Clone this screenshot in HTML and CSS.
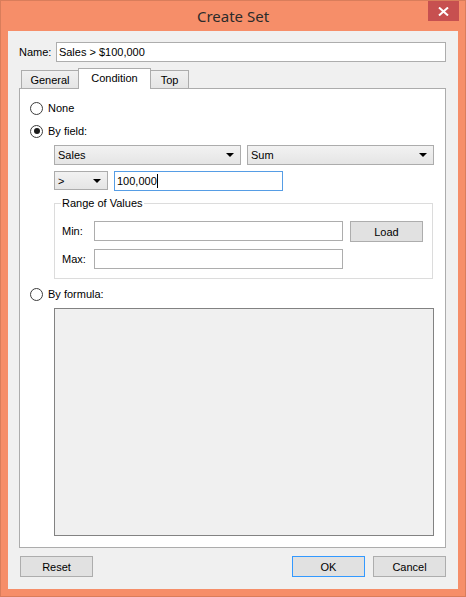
FILE: index.html
```html
<!DOCTYPE html>
<html>
<head>
<meta charset="utf-8">
<title>Create Set</title>
<link rel="stylesheet" href="styles.css">
</head>
<body>
<div class="window">
  <div class="titlebar">
    <div class="tb-spacer"></div>
    <div class="title">Create Set</div>
    <div class="tb-right">
      <div class="close">
        <svg width="11" height="9" viewBox="0 0 11 9"><path d="M1 0.5 L10 8.5 M10 0.5 L1 8.5" stroke="#fff" stroke-width="2"/></svg>
      </div>
    </div>
  </div>
  <div class="client">
    <div class="name-row">
      <span class="name-label">Name:</span>
      <div class="textbox name-input">Sales &gt; $100,000</div>
    </div>
    <div class="tabs">
      <div class="tab">General</div>
      <div class="tab selected">Condition</div>
      <div class="tab">Top</div>
    </div>
    <div class="panel">
      <div class="radio-row">
        <span class="radio"></span><span>None</span>
      </div>
      <div class="radio-row second">
        <span class="radio checked"></span><span>By field:</span>
      </div>
      <div class="field-row">
        <div class="dropdown wide"><span>Sales</span><span class="arrow"></span></div>
        <div class="dropdown wide"><span>Sum</span><span class="arrow"></span></div>
      </div>
      <div class="op-row">
        <div class="dropdown op"><span>&gt;</span><span class="arrow"></span></div>
        <div class="textbox value-input focus"><span class="caret">100,000</span></div>
      </div>
      <div class="group">
        <div class="legend">Range of Values</div>
        <div class="range-row">
          <span class="range-label">Min:</span>
          <div class="textbox range-input"></div>
          <div class="button load">Load</div>
        </div>
        <div class="range-row max">
          <span class="range-label">Max:</span>
          <div class="textbox range-input"></div>
        </div>
      </div>
      <div class="radio-row formula-radio">
        <span class="radio"></span><span>By formula:</span>
      </div>
      <div class="formula-box"></div>
    </div>
    <div class="buttons">
      <div class="button">Reset</div>
      <div class="btn-spacer"></div>
      <div class="button default">OK</div>
      <div class="button">Cancel</div>
    </div>
  </div>
</div>
</body>
</html>
```
FILE: styles.css
```css
* { box-sizing: border-box; }
html, body { margin: 0; padding: 0; }
body {
  font-family: "Liberation Sans", Arial, sans-serif;
  font-size: 11px;
  color: #000;
  background: #f68e69;
}
.window {
  width: 466px;
  height: 597px;
  background: #f68e69;
  border: 1px solid #d97d5b;
  padding: 0 7px 7px 7px;
}
.titlebar {
  height: 30px;
  display: grid;
  grid-template-columns: 1fr auto 1fr;
  margin: 0 -7px;
}
.title {
  font-family: "Noto Sans", "Open Sans", sans-serif;
  font-size: 15px;
  color: #2b2b2b;
  line-height: 30px;
}
.tb-right { display: flex; justify-content: flex-end; }
.close {
  width: 31px;
  height: 20px;
  margin-right: 6px;
  background: #c75050;
  display: flex;
  align-items: center;
  justify-content: center;
}
.client {
  background: #f0f0f0;
  height: 558px;
  padding: 11px 12px 0 11px;
}
.name-row {
  display: flex;
  align-items: center;
  height: 20px;
}
.name-label { width: 37px; }
.textbox {
  background: #fff;
  border: 1px solid #adadad;
  height: 20px;
  display: flex;
  align-items: center;
  padding-left: 2px;
  white-space: nowrap;
}
.name-input { width: 391px; }
.tabs {
  margin-top: 6px;
  height: 20px;
  padding-left: 2px;
  display: flex;
  align-items: flex-end;
  position: relative;
  z-index: 2;
}
.tab {
  height: 18px;
  border: 1px solid #acacac;
  border-bottom: none;
  background: linear-gradient(#f0f0f0, #e5e5e5);
  display: flex;
  align-items: center;
  justify-content: center;
  padding-top: 1px;
}
.tab:nth-child(1) { width: 58px; }
.tab:nth-child(2) { width: 73px; margin-left: -1px; }
.tab:nth-child(3) { width: 39px; margin-left: -1px; }
.tab.selected {
  height: 21px;
  background: #fff;
  margin-bottom: -1px;
  position: relative;
  z-index: 3;
  padding-top: 0;
  padding-bottom: 2px;
}
.panel {
  width: 427px;
  background: #fff;
  border: 1px solid #acacac;
  padding: 11px 0 11px 10px;
  position: relative;
  z-index: 1;
}
.radio-row {
  height: 16px;
  display: flex;
  align-items: center;
  gap: 5px;
}
.radio-row.second { margin-top: 7px; }
.radio {
  width: 13px;
  height: 13px;
  border-radius: 50%;
  border: 1px solid #3c3c3c;
  background: #fff;
  display: flex;
  align-items: center;
  justify-content: center;
}
.radio.checked::after {
  content: "";
  width: 6px;
  height: 6px;
  border-radius: 50%;
  background: #1a1a1a;
}
.field-row {
  margin-top: 6px;
  padding-left: 24px;
  display: flex;
  gap: 6px;
}
.dropdown {
  height: 20px;
  border: 1px solid #acacac;
  background: linear-gradient(#f2f2f2, #e5e5e5);
  display: flex;
  align-items: center;
  justify-content: space-between;
  padding: 0 6px 0 3px;
}
.dropdown.wide { width: 187px; }
.dropdown.op { width: 54px; height: 19px; }
.arrow {
  width: 0;
  height: 0;
  border-left: 4px solid transparent;
  border-right: 4px solid transparent;
  border-top: 4px solid #000;
}
.op-row {
  margin-top: 6px;
  padding-left: 24px;
  display: flex;
  align-items: flex-start;
  gap: 6px;
}
.value-input {
  width: 169px;
  border-color: #569de5;
}
.caret {
  border-right: 1px solid #000;
  line-height: 14px;
  padding-right: 0;
}
.group {
  margin: 12px 0 0 24px;
  width: 379px;
  border: 1px solid #dcdcdc;
  padding: 0 0 9px 7px;
}
.legend {
  width: max-content;
  margin: -7px 0 0 -1px;
  padding: 0 1px;
  background: #fff;
  line-height: 13px;
}
.range-row {
  margin-top: 11px;
  display: flex;
  align-items: flex-start;
}
.range-row.max { margin-top: 7px; }
.range-label { width: 32px; line-height: 20px; }
.range-input { width: 249px; }
.button {
  width: 73px;
  height: 21px;
  border: 1px solid #adadad;
  background: #e1e1e1;
  display: flex;
  align-items: center;
  justify-content: center;
}
.load { margin-left: 7px; }
.formula-radio { margin-top: 7px; }
.formula-box {
  margin: 6px 0 0 24px;
  width: 380px;
  height: 228px;
  background: #f0f0f0;
  border: 1px solid #828282;
}
.buttons {
  margin-top: 8px;
  display: flex;
  gap: 8px;
  padding-left: 1px;
}
.btn-spacer { flex: 1; }
.button.default { border-color: #3399ff; }
```
